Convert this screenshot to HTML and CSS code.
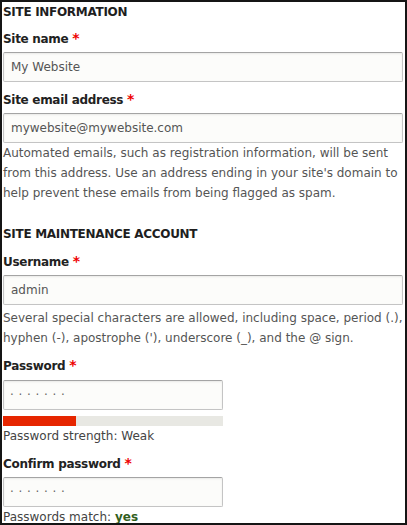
FILE: index.html
```html
<!DOCTYPE html>
<html lang="en">
<head>
<meta charset="utf-8">
<title>Configure site</title>
<link rel="stylesheet" href="styles.css">
</head>
<body>
<div class="page">
  <h2 class="section-title">Site information</h2>
  <div class="field field-first">
    <label class="label">Site name <span class="req">*</span></label>
    <input class="text-input" type="text" value="My Website">
  </div>
  <div class="field">
    <label class="label">Site email address <span class="req">*</span></label>
    <input class="text-input" type="text" value="mywebsite@mywebsite.com">
    <div class="description">Automated emails, such as registration information, will be sent from this address. Use an address ending in your site's domain to help prevent these emails from being flagged as spam.</div>
  </div>

  <h2 class="section-title section-second">Site maintenance account</h2>
  <div class="field field-user">
    <label class="label">Username <span class="req">*</span></label>
    <input class="text-input" type="text" value="admin">
    <div class="description">Several special characters are allowed, including space, period (.), hyphen (-), apostrophe ('), underscore (_), and the @ sign.</div>
  </div>
  <div class="field field-pass">
    <label class="label">Password <span class="req">*</span></label>
    <input class="text-input short pass" type="text" value="·······">
    <div class="strength"><div class="strength-fill" style="width: 33%"></div></div>
    <div class="status">Password strength: Weak</div>
  </div>
  <div class="field field-confirm">
    <label class="label">Confirm password <span class="req">*</span></label>
    <input class="text-input short pass" type="text" value="·······">
    <div class="status">Passwords match: <span class="ok">yes</span></div>
  </div>
</div>
</body>
</html>
```
FILE: styles.css
```css
html, body {
  margin: 0;
  padding: 0;
  background: #fff;
}

.page {
  box-sizing: border-box;
  width: 407px;
  height: 525px;
  border: 2px solid #151515;
  padding: 0 2px 0 1px;
  font-family: "DejaVu Sans", sans-serif;
  font-size: 12px;
  line-height: 20px;
  color: #333;
  overflow: hidden;
}

.section-title {
  margin: 0;
  font-size: 12px;
  line-height: 20px;
  font-weight: bold;
  text-transform: uppercase;
  letter-spacing: -0.3px;
  color: #1e1e1e;
}

.section-second {
  margin-top: 21px;
}

.field {
  display: flex;
  flex-direction: column;
  align-items: flex-start;
  margin-top: 8px;
}

.field-first {
  margin-top: 7px;
}

.label {
  display: block;
  font-weight: bold;
  line-height: 20px;
  letter-spacing: -0.3px;
  margin-bottom: 3px;
  color: #222;
}

.req {
  color: #e00;
  font-size: 14px;
  line-height: 0;
  letter-spacing: 0;
}

.text-input {
  box-sizing: border-box;
  width: 100%;
  height: 30px;
  margin: 0;
  padding: 0 7px;
  font-family: "DejaVu Sans", sans-serif;
  font-size: 12px;
  color: #555;
  background: #fcfcfa;
  border: 1px solid #c4c4c4;
  border-top-color: #a4a4a4;
  border-radius: 2px;
  box-shadow: inset 0 1px 2px rgba(0, 0, 0, 0.08);
}

.text-input.short {
  width: 220px;
}

.pass {
  letter-spacing: 4.7px;
  padding-left: 6px;
  color: #666;
}

.description {
  color: #555;
  line-height: 20px;
}

.field-user .description {
  margin-top: 3px;
}

.field-pass .label {
  margin-bottom: 4px;
}

.strength {
  width: 220px;
  height: 10px;
  margin-top: 6px;
  background: #e8e8e3;
}

.strength-fill {
  height: 100%;
  background: #e62600;
}

.status {
  color: #444;
  line-height: 20px;
}

.ok {
  color: #325e1c;
  font-weight: bold;
}
```
